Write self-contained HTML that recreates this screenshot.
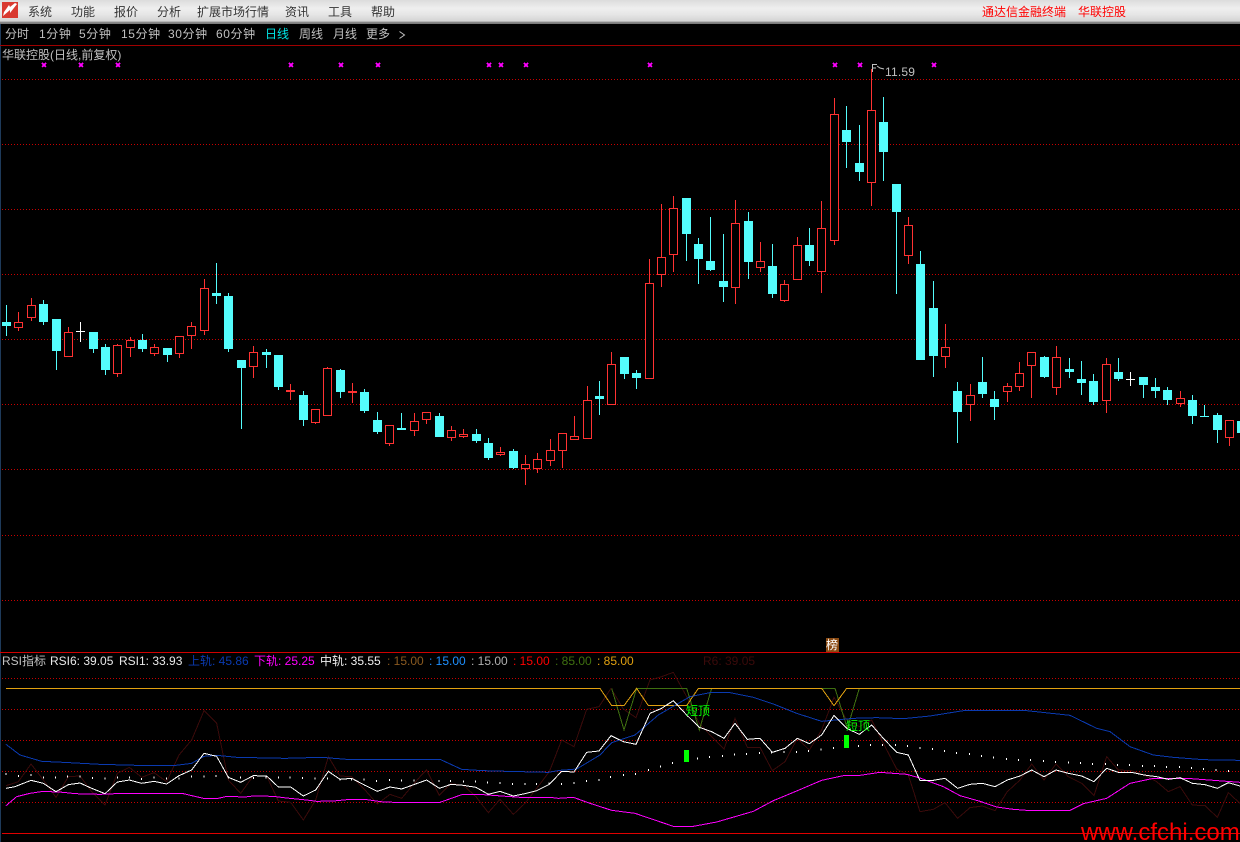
<!DOCTYPE html>
<html><head><meta charset="utf-8"><title>华联控股</title>
<style>
html,body{margin:0;padding:0;background:#000;width:1240px;height:842px;overflow:hidden}
#p{position:relative;width:1240px;height:842px;overflow:hidden;background:#000;font-family:"Liberation Sans","WenQuanYi Zen Hei","Noto Sans CJK SC",sans-serif;font-size:12px;line-height:14px}
#bar{position:absolute;left:0;top:0;width:1240px;height:24px;background:linear-gradient(#dcdcdc 0,#efefef 35%,#e6e6e6 60%,#d4d4d4 88%,#8a8a8a 92%,#777 100%)}
#p span{position:absolute;white-space:pre}
.m{top:5px;color:#333}
.r{top:5px;color:#f00}
.t{top:27px;color:#c0c0c0}
.s{letter-spacing:.6px}
.l{top:654px}
.g{position:absolute;left:2px;width:1238px;height:1px;background:repeating-linear-gradient(90deg,#c80000 0 1px,transparent 1px 3px)}
svg{position:absolute;left:0;top:0}
</style></head><body><div id="p">
<div id="bar"></div>
<div class="g" style="top:79px"></div>
<div class="g" style="top:144px"></div>
<div class="g" style="top:209px"></div>
<div class="g" style="top:274px"></div>
<div class="g" style="top:339px"></div>
<div class="g" style="top:404px"></div>
<div class="g" style="top:469px"></div>
<div class="g" style="top:535px"></div>
<div class="g" style="top:600px"></div>
<div class="g" style="top:678px"></div>
<div class="g" style="top:709px"></div>
<div class="g" style="top:740px"></div>
<div class="g" style="top:771px"></div>
<div class="g" style="top:802px"></div>
<svg width="1240" height="842" viewBox="0 0 1240 842" shape-rendering="crispEdges">
<rect x="0" y="24" width="1" height="818" fill="#1e3a5a"/>
<rect x="2" y="2" width="16" height="16" fill="#d93a30"/>
<path d="M3 16L10 10L10 13L17 4L15 3L10 7L9 5L4 12Z" fill="#fff" shape-rendering="auto"/>
<rect x="0" y="45" width="1240" height="1" fill="#a00000"/>
<rect x="0" y="652" width="1240" height="1" fill="#d00000"/>
<rect x="2" y="833" width="1238" height="1" fill="#e00000"/>
<path d="M399.5 31.5L404.5 35L399.5 38.5" stroke="#c0c0c0" fill="none" shape-rendering="auto"/>
<path d="M44 65m-2-2l4 4m0-4l-4 4M81 65m-2-2l4 4m0-4l-4 4M118 65m-2-2l4 4m0-4l-4 4M291 65m-2-2l4 4m0-4l-4 4M341 65m-2-2l4 4m0-4l-4 4M378 65m-2-2l4 4m0-4l-4 4M489 65m-2-2l4 4m0-4l-4 4M501 65m-2-2l4 4m0-4l-4 4M526 65m-2-2l4 4m0-4l-4 4M650 65m-2-2l4 4m0-4l-4 4M835 65m-2-2l4 4m0-4l-4 4M860 65m-2-2l4 4m0-4l-4 4M934 65m-2-2l4 4m0-4l-4 4" stroke="#ff00ff" stroke-width="1.5" fill="none"/>
<path stroke="#54fcfc" fill="none" d="M6.5 305V336M43.5 300V325M56.5 319V370M93.5 332V353M105.5 344V375M142.5 334V352M167.5 348V362M216.5 263V304M228.5 293V352M241.5 360V429M266.5 349V368M278.5 355V390M303.5 391V426M340.5 369V398M364.5 389V413M377.5 412V434M401.5 413V430M439.5 413V437M476.5 429V443M488.5 438V460M513.5 449V469M599.5 381V415M624.5 357V379M636.5 370V389M686.5 198V261M698.5 238V284M710.5 217V271M723.5 234V302M748.5 212V279M772.5 244V298M809.5 228V266M846.5 106V168M859.5 125V181M883.5 97V181M896.5 184V294M920.5 251V360M933.5 281V377M957.5 382V443M982.5 357V398M994.5 391V420M1044.5 356V378M1069.5 358V378M1081.5 361V395M1093.5 374V405M1118.5 358V381M1143.5 377V398M1155.5 378V398M1167.5 387V405M1192.5 395V424M1204.5 405V417M1217.5 413V443"/>
<path fill="#54fcfc" d="M2 322h9v4h-9zM39 304h9v18h-9zM52 319h9v32h-9zM89 332h9v17h-9zM101 347h9v23h-9zM138 340h9v9h-9zM163 348h9v7h-9zM212 293h9v3h-9zM224 296h9v53h-9zM237 360h9v8h-9zM262 352h9v3h-9zM274 355h9v32h-9zM299 395h9v25h-9zM336 370h9v22h-9zM360 392h9v19h-9zM373 420h9v12h-9zM397 428h9v2h-9zM435 416h9v21h-9zM472 434h9v7h-9zM484 443h9v15h-9zM509 451h9v17h-9zM595 396h9v3h-9zM620 357h9v17h-9zM632 373h9v5h-9zM682 198h9v36h-9zM694 244h9v15h-9zM706 261h9v9h-9zM719 281h9v6h-9zM744 221h9v41h-9zM768 266h9v28h-9zM805 245h9v16h-9zM842 130h9v12h-9zM855 163h9v9h-9zM879 122h9v30h-9zM892 184h9v28h-9zM916 264h9v96h-9zM929 308h9v48h-9zM953 391h9v21h-9zM978 382h9v12h-9zM990 399h9v8h-9zM1040 357h9v20h-9zM1065 369h9v3h-9zM1077 379h9v4h-9zM1089 381h9v21h-9zM1114 372h9v7h-9zM1139 377h9v8h-9zM1151 387h9v4h-9zM1163 390h9v10h-9zM1188 400h9v16h-9zM1200 416h9v1h-9zM1213 415h9v15h-9zM1237 421h9v12h-9z"/>
<path stroke="#ff3232" fill="none" d="M18.5 312V331M31.5 298V321M68.5 327V357M117.5 344V377M130.5 337V357M154.5 344V356M179.5 336V358M191.5 322V349M204.5 279V335M253.5 346V378M290.5 384V400M315.5 409V424M327.5 367V416M352.5 383V403M389.5 425V446M414.5 413V436M426.5 412V424M451.5 426V441M463.5 429V438M500.5 447V456M525.5 455V485M537.5 453V473M550.5 439V466M562.5 433V468M574.5 416V440M587.5 386V439M611.5 352V405M649.5 259V379M661.5 204V287M673.5 196V272M735.5 200V304M760.5 242V272M784.5 280V302M797.5 237V280M821.5 201V293M834.5 98V245M871.5 69V206M908.5 217V264M945.5 324V368M970.5 384V421M1007.5 383V402M1019.5 362V391M1031.5 352V398M1056.5 346V395M1106.5 358V413M1180.5 391V407M1229.5 420V446"/>
<path fill="#ff3232" d="M286 390h9v2h-9zM348 391h9v2h-9z"/>
<path stroke="#ff3232" fill="#000" d="M14.5 322.5h8v5h-8zM27.5 305.5h8v12h-8zM64.5 332.5h8v24h-8zM113.5 345.5h8v28h-8zM126.5 340.5h8v7h-8zM150.5 347.5h8v6h-8zM175.5 336.5h8v17h-8zM187.5 326.5h8v9h-8zM200.5 288.5h8v42h-8zM249.5 352.5h8v14h-8zM311.5 409.5h8v13h-8zM323.5 368.5h8v47h-8zM385.5 425.5h8v18h-8zM410.5 421.5h8v9h-8zM422.5 412.5h8v7h-8zM447.5 430.5h8v7h-8zM459.5 434.5h8v2h-8zM496.5 452.5h8v2h-8zM521.5 464.5h8v4h-8zM533.5 459.5h8v9h-8zM546.5 450.5h8v10h-8zM558.5 433.5h8v17h-8zM570.5 436.5h8v3h-8zM583.5 400.5h8v38h-8zM607.5 364.5h8v40h-8zM645.5 283.5h8v95h-8zM657.5 257.5h8v17h-8zM669.5 208.5h8v46h-8zM731.5 223.5h8v64h-8zM756.5 261.5h8v6h-8zM780.5 284.5h8v16h-8zM793.5 245.5h8v34h-8zM817.5 228.5h8v43h-8zM830.5 114.5h8v126h-8zM867.5 110.5h8v72h-8zM904.5 225.5h8v30h-8zM941.5 347.5h8v9h-8zM966.5 395.5h8v9h-8zM1003.5 386.5h8v5h-8zM1015.5 373.5h8v13h-8zM1027.5 352.5h8v13h-8zM1052.5 357.5h8v30h-8zM1102.5 364.5h8v36h-8zM1176.5 398.5h8v5h-8zM1225.5 420.5h8v17h-8z"/>
<path stroke="#fff" fill="none" d="M80.5 322V342M76 331.5H85M1130.5 372V386M1126 379.5H1135"/>
<path d="M872.5 72V64.5H877M873 68H876M877 66L880 68L884 69" stroke="#c0c0c0" fill="none" shape-rendering="auto"/>
<rect x="826" y="638" width="13" height="14" fill="#8a4a12"/>
<g transform="translate(0 640) scale(.333333)" fill="none" stroke-width="1">
<polyline vector-effect="non-scaling-stroke" stroke="#3a0a0a" points="18,437 55,425 93,372 130,420 168,472 205,410 240,408 275,455 315,495 352,400 388,382 425,412 462,398 500,425 537,345 575,300 612,212 650,250 685,420 722,460 760,407 800,408 835,483 872,487 910,540 947,480 985,350 1020,408 1055,410 1095,450 1132,492 1170,463 1205,475 1260,410 1280,390 1318,466 1353,431 1390,436 1428,470 1465,518 1500,478 1540,523 1575,490 1610,445 1648,395 1685,300 1722,320 1760,208 1797,200 1833,145 1870,207 1908,233 1950,120 1985,110 2020,97 2060,170 2098,250 2135,290 2172,327 2205,235 2242,322 2280,322 2317,392 2355,365 2392,295 2428,330 2465,270 2502,172 2540,240 2578,260 2615,240 2650,310 2690,387 2725,405 2760,515 2800,508 2835,488 2873,535 2910,503 2947,498 2985,512 3022,455 3060,420 3095,372 3132,420 3168,372 3205,410 3245,430 3282,467 3320,350 3355,390 3395,392 3432,405 3470,425 3505,455 3540,440 3577,495 3615,497 3652,532 3685,458 3720,490"/>
<polyline vector-effect="non-scaling-stroke" stroke="#3f7010" points="1835,145 1872,270 1910,145 2060,145 2098,270 2135,145 2505,145 2542,265 2578,145"/>
<polyline vector-effect="non-scaling-stroke" stroke="#e0a010" points="18,145 1800,145 1835,197 1872,197 1910,145 1945,197 2060,197 2095,145 2465,145 2502,197 2540,145 3720,145"/>
<polyline vector-effect="non-scaling-stroke" stroke="#0a3ab0" points="18,313 60,345 125,364 190,367 300,373 410,376 520,377 575,370 612,349 650,346 710,352 855,355 965,352 1040,358 1320,358 1385,388 1450,392 1520,394 1645,397 1680,391 1730,387 1800,345 1835,308 1905,285 1975,225 2070,170 2130,158 2185,157 2260,172 2320,192 2390,220 2465,244 2560,235 2630,233 2710,236 2790,228 2890,212 3080,212 3210,226 3290,265 3330,275 3390,320 3460,345 3520,352 3610,359 3720,361"/>
<polyline vector-effect="non-scaling-stroke" stroke="#ff00ff" points="18,497 50,470 90,460 130,454 190,457 225,461 300,463 370,460 550,461 610,475 655,475 680,469 735,471 760,468 820,469 860,474 920,480 950,484 1000,483 1040,479 1100,479 1150,486 1220,488 1320,487 1385,464 1450,464 1560,472 1650,472 1675,475 1720,472 1770,490 1835,511 1905,520 2020,559 2080,559 2150,546 2260,514 2320,482 2390,453 2465,421 2530,407 2580,406 2640,397 2720,403 2760,414 2830,440 2880,467 2940,484 2990,501 3040,508 3080,511 3210,511 3250,491 3320,475 3390,430 3460,415 3560,415 3720,427"/>
<polyline vector-effect="non-scaling-stroke" stroke="#fff" points="18,445 45,440 93,421 130,430 168,455 205,434 240,429 275,445 315,461 352,426 388,420 425,430 462,424 500,432 537,407 575,390 612,340 650,349 685,412 722,427 760,407 800,408 835,441 872,441 910,468 947,450 985,394 1020,418 1055,415 1095,436 1132,454 1170,441 1205,447 1280,420 1318,445 1353,433 1390,436 1428,442 1465,463 1500,454 1540,468 1575,461 1610,452 1648,433 1685,394 1722,396 1760,337 1797,333 1833,287 1870,305 1908,313 1950,220 1985,205 2020,182 2060,225 2098,262 2135,275 2172,295 2205,250 2242,298 2280,295 2317,337 2355,325 2392,295 2428,311 2465,285 2502,226 2540,265 2578,283 2615,255 2650,295 2690,337 2725,345 2760,422 2800,421 2835,415 2873,445 2910,433 2947,430 2985,440 3022,420 3060,408 3095,390 3132,410 3168,390 3205,400 3245,408 3282,425 3320,385 3355,397 3395,397 3432,405 3470,410 3505,418 3540,413 3577,430 3615,434 3652,445 3685,428 3720,438"/>
<path vector-effect="non-scaling-stroke" stroke="#fff" d="M18 399v6M55 405v6M93 402v6M130 409v6M167 409v6M203 406v6M240 406v6M278 411v6M315 413v6M352 409v6M388 409v6M425 414v6M462 409v6M500 412v6M537 413v6M575 407v6M612 406v6M648 405v6M685 409v6M722 409v6M760 411v6M798 409v6M835 409v6M870 409v6M908 411v6M945 412v6M982 413v6M1020 415v6M1055 415v6M1092 415v6M1130 420v6M1168 417v6M1205 419v6M1242 419v6M1317 420v6M1352 420v6M1390 422v6M1427 422v6M1463 424v6M1500 426v6M1538 429v6M1575 429v6M1610 429v6M1647 427v6M1685 429v6M1722 426v6M1760 420v6M1797 417v6M1832 408v6M1870 402v6M1907 399v6M1945 387v6M1982 377v6M2018 366v6M2092 353v6M2128 348v6M2168 345v6M2203 341v6M2240 339v6M2278 336v6M2315 335v6M2352 333v6M2390 333v6M2426 330v6M2463 326v6M2500 321v6M2575 315v6M2612 312v6M2648 312v6M2686 312v6M2723 315v6M2760 321v6M2797 324v6M2833 330v6M2870 336v6M2908 339v6M2945 345v6M2980 350v6M3019 354v6M3055 357v6M3092 357v6M3130 360v6M3166 363v6M3205 364v6M3242 366v6M3278 369v6M3316 369v6M3352 372v6M3388 372v6M3427 375v6M3463 375v6M3500 378v6M3538 378v6M3575 381v6M3610 384v6M3648 387v6M3686 390v6"/>
</g>
<rect x="684" y="750" width="5" height="12" fill="#00ff00"/>
<rect x="844" y="735" width="5" height="13" fill="#00ff00"/>
</svg>
<span class="m" style="left:28px">系统</span>
<span class="m" style="left:71px">功能</span>
<span class="m" style="left:114px">报价</span>
<span class="m" style="left:157px">分析</span>
<span class="m" style="left:197px">扩展市场行情</span>
<span class="m" style="left:285px">资讯</span>
<span class="m" style="left:328px">工具</span>
<span class="m" style="left:371px">帮助</span>
<span class="r" style="left:982px">通达信金融终端</span>
<span class="r" style="left:1078px">华联控股</span>
<span class="t" style="left:5px">分时</span>
<span class="t s" style="left:39px">1分钟</span>
<span class="t s" style="left:79px">5分钟</span>
<span class="t s" style="left:121px">15分钟</span>
<span class="t s" style="left:168px">30分钟</span>
<span class="t s" style="left:216px">60分钟</span>
<span class="t" style="left:265px;color:#00e4e4">日线</span>
<span class="t" style="left:299px">周线</span>
<span class="t" style="left:333px">月线</span>
<span class="t" style="left:366px">更多</span>
<span style="left:2px;top:48px;color:#c0c0c0">华联控股(日线,前复权)</span>
<span style="left:885px;top:65px;color:#c0c0c0;letter-spacing:.2px">11.59</span>
<span style="left:826px;top:638px;color:#fff">榜</span>
<span class="l" style="left:2px;color:#c0c0c0">RSI指标</span>
<span class="l" style="left:50px;color:#e8e8e8">RSI6: 39.05</span>
<span class="l" style="left:119px;color:#e8e8e8">RSI1: 33.93</span>
<span class="l" style="left:188px;color:#0a3ab0">上轨: 45.86</span>
<span class="l" style="left:254px;color:#ff00ff">下轨: 25.25</span>
<span class="l" style="left:320px;color:#f0f0f0">中轨: 35.55</span>
<span class="l" style="left:387px;color:#8a5a20">: 15.00</span>
<span class="l" style="left:429px;color:#1e90ff">: 15.00</span>
<span class="l" style="left:471px;color:#b0b0b0">: 15.00</span>
<span class="l" style="left:513px;color:#f00">: 15.00</span>
<span class="l" style="left:555px;color:#3f7010">: 85.00</span>
<span class="l" style="left:597px;color:#e0a010">: 85.00</span>
<span class="l" style="left:703px;color:#3a0a0a">R6: 39.05</span>
<span style="left:686px;top:704px;color:#00ff00">短顶</span>
<span style="left:846px;top:719px;color:#00ff00">短顶</span>
<span style="left:1081px;top:819px;color:#f00;font-size:24px;line-height:28px">www.cfchi.com</span>
</div></body></html>
